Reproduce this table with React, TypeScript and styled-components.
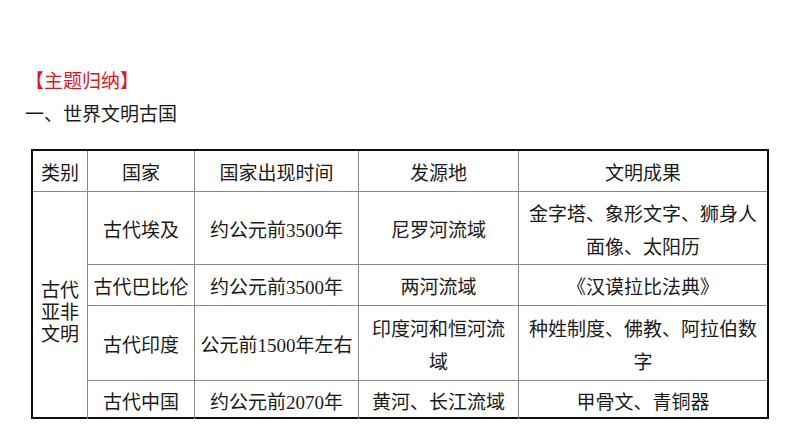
/* eslint-disable */
import React from "react";
import styled, { createGlobalStyle } from "styled-components";

const GlobalStyle = createGlobalStyle`
    body {
        margin: 0;
        background: #ffffff;
        font-family: "Liberation Serif", "Noto Sans CJK SC", serif;
        color: #1a1a1a;
    }
`;

const Page = styled.div`
    width: 794px;
    height: 447px;
    padding: 63px 0 0 25px;
    box-sizing: border-box;
`;

const Title = styled.div<{ $accent?: boolean }>`
    font-family: "Noto Sans CJK SC", sans-serif;
    font-size: 19px;
    line-height: 33px;
    height: 33px;
    color: ${({ $accent }) => ($accent ? "#e3141b" : "#1a1a1a")};
`;

const Grid = styled.div`
    margin: 20px 0 0 6px;
    width: 738px;
    box-sizing: border-box;
    display: grid;
    grid-template-columns: 55px 107px 164px 160px 1fr;
    grid-template-rows: 41px 73px 41px 75px 1fr;
    height: 270px;
    border: 2px solid #111111;
`;

const Cell = styled.div<{ $last?: boolean; $bottom?: boolean; $span?: number }>`
    display: flex;
    align-items: center;
    justify-content: center;
    text-align: center;
    padding-top: 5px;
    font-size: 19px;
    line-height: 33px;
    border-right: ${({ $last }) => ($last ? "none" : "1px solid #8a8a8a")};
    border-bottom: ${({ $bottom }) => ($bottom ? "none" : "1px solid #8a8a8a")};
    grid-row: ${({ $span }) => ($span ? `span ${$span}` : "auto")};
`;

const Stacked = styled.span`
    line-height: 22px;
    padding-top: 10px;
`;

const header = ["类别", "国家", "国家出现时间", "发源地", "文明成果"];

const rows: { country: string; time: string; origin: React.ReactNode; result: React.ReactNode }[] = [
    {
        country: "古代埃及",
        time: "约公元前3500年",
        origin: "尼罗河流域",
        result: (
            <>
                金字塔、象形文字、狮身人
                <br />
                面像、太阳历
            </>
        ),
    },
    { country: "古代巴比伦", time: "约公元前3500年", origin: "两河流域", result: "《汉谟拉比法典》" },
    {
        country: "古代印度",
        time: "公元前1500年左右",
        origin: (
            <>
                印度河和恒河流
                <br />域
            </>
        ),
        result: (
            <>
                种姓制度、佛教、阿拉伯数
                <br />字
            </>
        ),
    },
    { country: "古代中国", time: "约公元前2070年", origin: "黄河、长江流域", result: "甲骨文、青铜器" },
];

export default function App() {
    return (
        <Page>
            <GlobalStyle />
            <Title $accent>【主题归纳】</Title>
            <Title>一、世界文明古国</Title>
            <Grid>
                {header.map((h, i) => (
                    <Cell key={h} $last={i === header.length - 1}>
                        {h}
                    </Cell>
                ))}
                <Cell $span={4} $bottom>
                    <Stacked>
                        古代
                        <br />
                        亚非
                        <br />
                        文明
                    </Stacked>
                </Cell>
                {rows.map((r, i) => {
                    const bottom = i === rows.length - 1;
                    return (
                        <React.Fragment key={r.country}>
                            <Cell $bottom={bottom}>{r.country}</Cell>
                            <Cell $bottom={bottom}>{r.time}</Cell>
                            <Cell $bottom={bottom}>{r.origin}</Cell>
                            <Cell $bottom={bottom} $last>
                                {r.result}
                            </Cell>
                        </React.Fragment>
                    );
                })}
            </Grid>
        </Page>
    );
}
